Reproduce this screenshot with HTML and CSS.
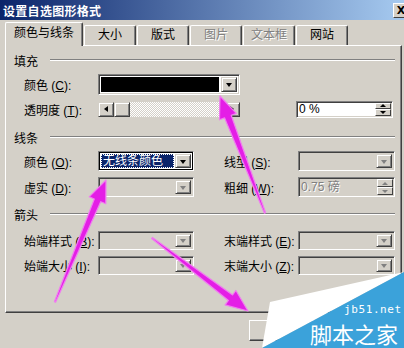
FILE: index.html
```html
<!DOCTYPE html>
<html lang="zh-CN">
<head>
    <meta charset="UTF-8">
    <meta name="viewport" content="width=device-width, initial-scale=1.0">
    <title>设置自选图形格式</title>
    <link rel="stylesheet" href="styles.css">
</head>
<body>

    <div class="dialog">
        <!-- Title bar -->
        <div class="titlebar">
            <span class="title">设置自选图形格式</span>
            <span class="close">X</span>
        </div>

        <!-- Tabs -->
        <div class="tabs">
            <div class="tab active">颜色与线条</div>
            <div class="tab">大小</div>
            <div class="tab">版式</div>
            <div class="tab disabled">图片</div>
            <div class="tab disabled">文本框</div>
            <div class="tab">网站</div>
        </div>

        <div class="panel">
            <!-- Fill -->
            <div class="group-head"><span>填充</span><i class="rule"></i></div>
            <div class="row row-color">
                <label class="label">颜色 (<u>C</u>):</label>
                <div class="colorbox">
                    <div class="swatch"></div>
                    <div class="drop"><i class="tri"></i></div>
                </div>
            </div>
            <div class="row row-alpha">
                <label class="label">透明度 (<u>T</u>):</label>
                <div class="scrollbar">
                    <div class="sbtn"><i class="tri-left"></i></div>
                    <div class="thumb"></div>
                    <div class="track"></div>
                    <div class="sbtn"><i class="tri-right"></i></div>
                </div>
                <div class="spin">
                    <span class="spin-text">0 %</span>
                    <div class="spin-btns"><div class="sup"><i class="tri-up"></i></div><div class="sdown"><i class="tri"></i></div></div>
                </div>
            </div>

            <!-- Line -->
            <div class="group-head head-line"><span>线条</span><i class="rule"></i></div>
            <div class="row row-first">
                <label class="label">颜色 (<u>O</u>):</label>
                <div class="combo focus">
                    <div class="combo-text"><span class="sel">无线条颜色</span></div>
                    <div class="drop"><i class="tri"></i></div>
                </div>
                <label class="label label-right">线型 (<u>S</u>):</label>
                <div class="combo combo-right off">
                    <div class="combo-text"></div>
                    <div class="drop"><i class="tri"></i></div>
                </div>
            </div>
            <div class="row row-next">
                <label class="label">虚实 (<u>D</u>):</label>
                <div class="combo off">
                    <div class="combo-text"></div>
                    <div class="drop"><i class="tri"></i></div>
                </div>
                <label class="label label-right">粗细 (<u>W</u>):</label>
                <div class="spin combo-right off">
                    <span class="spin-text">0.75 磅</span>
                    <div class="spin-btns"><div class="sup"><i class="tri-up"></i></div><div class="sdown"><i class="tri"></i></div></div>
                </div>
            </div>

            <!-- Arrows -->
            <div class="group-head head-arrow"><span>箭头</span><i class="rule"></i></div>
            <div class="row row-first small">
                <label class="label">始端样式 (<u>B</u>):</label>
                <div class="combo off">
                    <div class="combo-text"></div>
                    <div class="drop"><i class="tri"></i></div>
                </div>
                <label class="label label-right">末端样式 (<u>E</u>):</label>
                <div class="combo combo-right off">
                    <div class="combo-text"></div>
                    <div class="drop"><i class="tri"></i></div>
                </div>
            </div>
            <div class="row row-next small">
                <label class="label">始端大小 (<u>I</u>):</label>
                <div class="combo off">
                    <div class="combo-text"></div>
                    <div class="drop"><i class="tri"></i></div>
                </div>
                <label class="label label-right">末端大小 (<u>Z</u>):</label>
                <div class="combo combo-right off">
                    <div class="combo-text"></div>
                    <div class="drop"><i class="tri"></i></div>
                </div>
            </div>
        </div>

        <div class="buttons">
            <div class="btn"></div>
        </div>

        <!-- Annotation arrows drawn over the dialog -->
        <svg class="arrows" width="404" height="348" viewBox="0 0 404 348">
            <polygon points="265.6,212.8 231.2,115.3 236.3,113.4 220,96 219.5,119.8 224.6,117.9 264.4,213.2"/>
            <polygon points="55.6,302.2 100.7,201.7 105.8,203.8 106,180 89.2,196.8 94.3,199 54.4,301.8"/>
            <polygon points="151.6,238.5 228.4,300.5 225.1,304.9 248,311 235.9,290.5 232.6,294.9 152.4,237.5"/>
        </svg>

        <!-- Site watermark -->
        <div class="watermark">
            <svg width="404" height="348" viewBox="0 0 404 348">
                <polygon class="wm-white" points="270,302 404,272 262,348"/>
                <polygon class="wm-blue" points="262,348 404,272 404,348"/>
            </svg>
            <span class="wm-url">jb51.net</span>
            <span class="wm-name">脚本之家</span>
        </div>
    </div>

</body>
</html>
```

FILE: styles.css
```css
body, html {
    margin: 0;
    padding: 0;
    height: 100%;
    overflow: hidden;
    background: #d4d0c8;
}

.dialog {
    position: relative;
    width: 404px;
    height: 348px;
    display: flex;
    flex-direction: column;
    font-family: "Liberation Sans", "Noto Sans CJK SC", sans-serif;
    font-size: 12px;
    color: #000;
    overflow: hidden;
}

/* Title bar */
.titlebar {
    height: 20px;
    display: flex;
    align-items: center;
    justify-content: space-between;
    padding-left: 3px;
    background: linear-gradient(to right, #0a246a, #a6caf0);
}

.title {
    color: #fff;
    font-weight: bold;
    font-size: 12px;
    letter-spacing: 0.3px;
}

.close {
    width: 14px;
    height: 13px;
    margin-right: -5px;
    background: #d4d0c8;
    border: 1px solid;
    border-color: #fff #404040 #404040 #fff;
    font-size: 11px;
    font-weight: bold;
    line-height: 13px;
    text-align: center;
    font-family: "DejaVu Sans", sans-serif;
}

/* Tabs */
.tabs {
    display: flex;
    align-items: flex-end;
    gap: 1px;
    height: 23px;
    margin-top: 2px;
    padding-left: 5px;
    position: relative;
    z-index: 1;
}

.tab {
    box-sizing: border-box;
    width: 52px;
    height: 20px;
    border: 1px solid #fff;
    border-bottom: none;
    border-right-color: #404040;
    box-shadow: inset -1px 0 #808080;
    border-radius: 2px 2px 0 0;
    text-align: center;
    line-height: 19px;
    background: #d4d0c8;
}

.tab.active {
    width: 78px;
    height: 24px;
    margin-bottom: -1px;
    line-height: 21px;
}

.tab.disabled {
    color: #808080;
    text-shadow: 1px 1px 0 #fff;
}

/* Tab page */
.panel {
    box-sizing: border-box;
    width: 397px;
    height: 268px;
    margin-left: 5px;
    border: 1px solid;
    border-color: #fff #404040 #404040 #fff;
    box-shadow: inset -1px -1px #808080;
    padding-top: 7px;
}

.group-head {
    display: flex;
    align-items: center;
    gap: 12px;
    height: 14px;
    padding-left: 8px;
    padding-right: 6px;
}

.rule {
    flex: 1;
    height: 0;
    border-top: 1px solid #808080;
    border-bottom: 1px solid #fff;
}

.head-line {
    margin-top: 13px;
}

.head-arrow {
    margin-top: 10px;
}

.row {
    display: flex;
    align-items: center;
    padding-left: 18px;
}

.label {
    width: 74px;
    flex: none;
    white-space: nowrap;
}

.label-right {
    margin-left: 30px;
}

.row-color {
    margin-top: 7px;
    height: 21px;
}

.row-alpha {
    margin-top: 6px;
    height: 16px;
}

.row-first {
    margin-top: 7px;
    height: 20px;
}

.row-next {
    margin-top: 6px;
    height: 20px;
}

.head-arrow + .row-first {
    margin-top: 10px;
}

.small {
    height: 19px;
}

/* Sunken 3D field border used by all inputs */
.colorbox, .combo, .spin {
    box-sizing: border-box;
    display: flex;
    border: 1px solid;
    border-color: #808080 #fff #fff #808080;
    box-shadow: inset 1px 1px #404040, inset -1px -1px #d4d0c8;
    padding: 2px;
    background: #fff;
}

.colorbox {
    width: 142px;
    height: 21px;
    gap: 2px;
}

.swatch {
    flex: 1;
    background: #000;
}

.drop {
    box-sizing: border-box;
    width: 16px;
    flex: none;
    display: flex;
    align-items: center;
    justify-content: center;
    background: #d4d0c8;
    border: 1px solid;
    border-color: #d4d0c8 #404040 #404040 #d4d0c8;
    box-shadow: inset 1px 1px #fff, inset -1px -1px #808080;
}

.tri, .tri-up, .tri-left, .tri-right {
    width: 0;
    height: 0;
    border: 3px solid transparent;
}

.tri {
    border-top: 4px solid #000;
    border-bottom: none;
    margin-top: 1px;
}

.tri-up {
    border-bottom: 3px solid #000;
    border-top: none;
}

.tri-left {
    border-right: 4px solid #000;
    border-left: none;
}

.tri-right {
    border-left: 4px solid #000;
    border-right: none;
}

/* Transparency scrollbar */
.scrollbar {
    display: flex;
    width: 142px;
    height: 15px;
}

.sbtn, .thumb {
    box-sizing: border-box;
    width: 16px;
    flex: none;
    display: flex;
    align-items: center;
    justify-content: center;
    background: #d4d0c8;
    border: 1px solid;
    border-color: #d4d0c8 #404040 #404040 #d4d0c8;
    box-shadow: inset 1px 1px #fff, inset -1px -1px #808080;
}

.track {
    flex: 1;
    background-color: #fff;
    background-image:
        linear-gradient(45deg, #d4d0c8 25%, transparent 25%, transparent 75%, #d4d0c8 75%),
        linear-gradient(45deg, #d4d0c8 25%, transparent 25%, transparent 75%, #d4d0c8 75%);
    background-size: 2px 2px;
    background-position: 0 0, 1px 1px;
}

/* Spin boxes */
.spin {
    width: 97px;
    height: 17px;
    margin-left: 56px;
    padding: 1px 1px 1px 2px;
    align-items: center;
}

.row-next .spin {
    height: 20px;
    margin-left: 0;
}

.spin-text {
    flex: 1;
    line-height: 14px;
}

.spin-btns {
    width: 16px;
    align-self: stretch;
    display: flex;
    flex-direction: column;
}

.sup, .sdown {
    box-sizing: border-box;
    flex: 1;
    display: flex;
    align-items: center;
    justify-content: center;
    background: #d4d0c8;
    border: 1px solid;
    border-color: #fff #404040 #404040 #fff;
}

.sdown .tri {
    border-top-width: 3px;
    margin-top: 0;
}

/* Combo boxes */
.combo {
    width: 96px;
    height: 20px;
    gap: 1px;
}

.combo-right {
    width: 97px;
}

.small .combo {
    height: 19px;
}

.combo-text {
    flex: 1;
    display: flex;
    align-items: center;
}

.combo.focus {
    box-shadow: inset 1px 1px #000, inset -1px -1px #000;
}

.sel {
    display: block;
    width: 100%;
    height: 14px;
    line-height: 14px;
    padding-left: 2px;
    background: #0a246a;
    color: #fff;
    outline: 1px dotted #fff;
    outline-offset: -1px;
}

.off {
    background: #d4d0c8;
}

.off .tri, .off .tri-up {
    border-top-color: #808080;
    border-bottom-color: #808080;
}

.off .spin-text {
    color: #808080;
    text-shadow: 1px 1px 0 #fff;
}

/* Dialog buttons */
.buttons {
    display: flex;
    padding-left: 249px;
    margin-top: 7px;
}

.btn {
    box-sizing: border-box;
    width: 75px;
    height: 21px;
    border: 1px solid;
    border-color: #fff #404040 #404040 #fff;
    box-shadow: inset -1px -1px #808080;
}

/* Overlays */
.arrows {
    position: absolute;
    top: 0;
    left: 0;
    pointer-events: none;
}

.arrows polygon {
    fill: #e41ee6;
    stroke: #f07cf0;
    stroke-width: 1.2;
    stroke-linejoin: round;
}

.watermark {
    position: absolute;
    top: 0;
    left: 0;
    width: 404px;
    height: 348px;
    pointer-events: none;
}

.watermark svg {
    position: absolute;
    top: 0;
    left: 0;
}

.wm-white {
    fill: #fff;
}

.wm-blue {
    fill: #3ba2da;
}

.wm-url {
    position: absolute;
    left: 344px;
    top: 304px;
    color: #fff;
    font-family: "DejaVu Sans Mono", monospace;
    font-size: 11px;
    letter-spacing: 0.6px;
    line-height: 12px;
}

.wm-name {
    position: absolute;
    left: 310px;
    top: 322px;
    color: #fff;
    font-family: "Noto Sans CJK SC", sans-serif;
    font-size: 22px;
    line-height: 22px;
}
```
